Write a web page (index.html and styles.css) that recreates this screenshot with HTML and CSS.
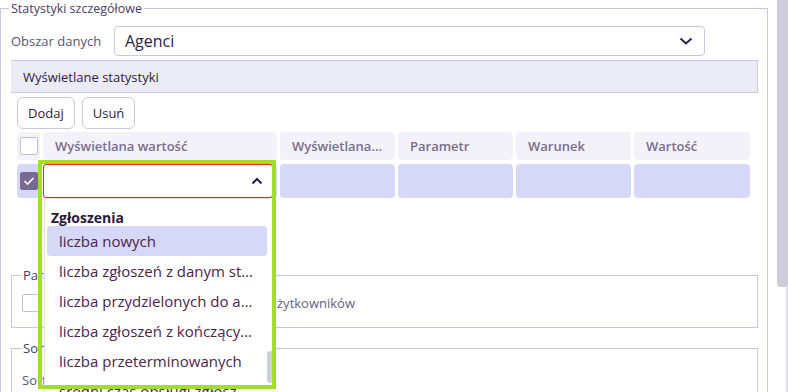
FILE: index.html
```html
<!DOCTYPE html>
<html lang="pl">
<head>
  <meta charset="UTF-8">
  <meta name="viewport" content="width=device-width, initial-scale=1.0">
  <title>Statystyki szczegółowe</title>
  <link rel="stylesheet" href="styles.css">
</head>
<body>
  <div class="page">
    <main class="main">
      <fieldset class="panel">
        <legend>Statystyki szczegółowe</legend>

        <div class="field-row">
          <label class="field-label">Obszar danych</label>
          <div class="select">
            <span>Agenci</span>
            <svg class="chevron" width="14" height="8" viewBox="0 0 14 8"><path d="M1.5 1.5 L7 6.5 L12.5 1.5" fill="none" stroke="#2a1d4a" stroke-width="2"/></svg>
          </div>
        </div>

        <div class="section-bar">Wyświetlane statystyki</div>

        <div class="toolbar">
          <button class="btn">Dodaj</button>
          <button class="btn">Usuń</button>
        </div>

        <div class="stats-table">
          <div class="cell head check-cell"><span class="box"></span></div>
          <div class="cell head">Wyświetlana wartość</div>
          <div class="cell head">Wyświetlana nazwa</div>
          <div class="cell head">Parametr</div>
          <div class="cell head">Warunek</div>
          <div class="cell head">Wartość</div>

          <div class="cell data check-cell">
            <span class="box checked">
              <svg width="12" height="10" viewBox="0 0 12 10"><path d="M1.5 5 L4.5 8 L10.5 2" fill="none" stroke="#fff" stroke-width="1.6"/></svg>
            </span>
          </div>
          <div class="cell data combo-cell">
            <div class="combo">
              <svg class="chevron" width="12" height="8" viewBox="0 0 12 8"><path d="M1.5 6.5 L6 2 L10.5 6.5" fill="none" stroke="#2a1d4a" stroke-width="2"/></svg>
            </div>
            <div class="listbox">
              <div class="list-items">
                <div class="group">Zgłoszenia</div>
                <div class="option active">liczba nowych</div>
                <div class="option">liczba zgłoszeń z danym statusem</div>
                <div class="option">liczba przydzielonych do agenta</div>
                <div class="option">liczba zgłoszeń z kończącym się terminem</div>
                <div class="option">liczba przeterminowanych</div>
                <div class="option">średni czas obsługi zgłoszenia</div>
              </div>
              <div class="list-scroll"><span class="thumb"></span></div>
            </div>
            <div class="highlight"></div>
          </div>
          <div class="cell data"></div>
          <div class="cell data"></div>
          <div class="cell data"></div>
          <div class="cell data"></div>
        </div>

        <fieldset class="group-box params">
          <legend>Parametry</legend>
          <label class="check-row"><span class="box"></span>Uwzględnij nieaktywnych i ukrytych użytkowników</label>
        </fieldset>

        <fieldset class="group-box sorting">
          <legend>Sortowanie</legend>
          <div class="sort-label">Sortuj według</div>
        </fieldset>
      </fieldset>
    </main>
    <div class="scrollbar"><span class="scroll-thumb"></span></div>
  </div>
</body>
</html>
```

FILE: styles.css
```css
body {
  margin: 0;
  font-family: "Open Sans", "DejaVu Sans", sans-serif;
  color: #2b2340;
  background: #ffffff;
  overflow: hidden;
}

.page {
  display: flex;
  height: 392px;
  overflow: hidden;
}

.main {
  flex: 1;
}

.panel {
  margin: 0 9px 0 0;
  padding: 0 9px 0 10px;
  border: 1px solid #c9c7dd;
  border-bottom: none;
  height: 420px;
}

.panel > legend {
  font-size: 12.5px;
  color: #4a4060;
  padding: 0 2px;
  margin-left: -2px;
}

.field-row {
  display: flex;
  align-items: center;
  margin-top: 9px;
}

.field-label {
  width: 103px;
  font-size: 13px;
  color: #5b5470;
}

.select {
  width: 591px;
  height: 30px;
  box-sizing: border-box;
  border: 1px solid #c9c7dd;
  border-radius: 4px;
  display: flex;
  align-items: center;
  justify-content: space-between;
  padding: 0 11px 0 10px;
  font-size: 16px;
  color: #2b2340;
}

.section-bar {
  margin-top: 4px;
  height: 33px;
  box-sizing: border-box;
  background: #ebebf6;
  border-top: 1px solid #c9c7e3;
  border-bottom: 1px solid #c9c7e3;
  border-right: 1px solid #c9c7e3;
  display: flex;
  align-items: center;
  padding-left: 12px;
  font-size: 13px;
  font-weight: 500;
}

.toolbar {
  display: flex;
  gap: 7px;
  margin: 4px 0 0 6px;
}

.btn {
  height: 32px;
  padding: 0 10px;
  background: #ffffff;
  border: 1px solid #c9c7dd;
  border-radius: 6px;
  font-family: inherit;
  font-size: 13px;
  font-weight: 500;
  color: #2b2340;
}

.stats-table {
  display: grid;
  grid-template-columns: 23px 234px 115px 115px 115px 116px;
  grid-template-rows: 28px 34px;
  column-gap: 3px;
  row-gap: 4px;
  margin: 3px 0 0 6px;
}

.cell {
  border-radius: 4px;
  display: flex;
  align-items: center;
  font-size: 13px;
  min-width: 0;
}

.cell.head {
  background: #f3f2f8;
  color: #7b6d8d;
  font-weight: 600;
  padding: 0 12px;
  white-space: nowrap;
  overflow: hidden;
  text-overflow: ellipsis;
  display: block;
  line-height: 28px;
}

.cell.data {
  background: #d6d8f8;
}

.cell.head.check-cell,
.check-cell {
  padding: 0;
  display: flex;
  justify-content: center;
  align-items: center;
}

.box {
  width: 18px;
  height: 18px;
  box-sizing: border-box;
  border: 1px solid #c4c0d2;
  border-radius: 2px;
  background: #ffffff;
  display: inline-flex;
  align-items: center;
  justify-content: center;
  flex-shrink: 0;
}

.box.checked {
  background: #776990;
  border-color: #776990;
}

.combo-cell {
  position: relative;
  background: transparent;
}

.combo {
  width: 230px;
  height: 34px;
  box-sizing: border-box;
  border: 1px solid #e3202c;
  border-radius: 3px;
  background: #ffffff;
  display: flex;
  align-items: center;
  justify-content: flex-end;
  padding-right: 9px;
}

.listbox {
  position: absolute;
  left: 1px;
  top: 34px;
  width: 228px;
  height: 240px;
  background: #ffffff;
  border: 1px solid #e4e3ee;
  border-radius: 3px;
  box-shadow: 0 2px 6px rgba(40, 30, 80, 0.12);
  display: flex;
  z-index: 2;
}

.list-items {
  width: 220px;
  padding: 5px 0 0 2px;
}

.group {
  font-size: 14px;
  font-weight: 700;
  color: #2a1a3a;
  padding-left: 4px;
  height: 22px;
  line-height: 28px;
}

.option {
  height: 30px;
  line-height: 30px;
  padding: 0 14px 0 12px;
  font-size: 15px;
  color: #4b2547;
  white-space: nowrap;
  overflow: hidden;
  text-overflow: ellipsis;
  border-radius: 4px;
}

.option.active {
  background: #d6d8f8;
}

.list-scroll {
  flex: 1;
  position: relative;
}

.thumb {
  position: absolute;
  left: 0;
  right: 0;
  top: 152px;
  height: 32px;
  border-radius: 4px;
  background: #cfcfd8;
}

.highlight {
  position: absolute;
  left: -5px;
  top: -4px;
  width: 230px;
  height: 221px;
  border: 4px solid #a2e01f;
  z-index: 3;
}

.group-box {
  margin: 0;
  padding: 0 10px;
  border: 1px solid #c9c7dd;
}

.group-box legend {
  font-size: 13px;
  color: #4a4060;
  padding: 0 1px;
}

.params {
  margin-top: 68px;
  height: 62px;
  box-sizing: border-box;
}

.check-row {
  display: flex;
  align-items: center;
  gap: 12px;
  font-size: 13px;
  color: #6a5d80;
  margin-top: 10px;
  white-space: nowrap;
}

.sorting {
  margin-top: 11px;
  height: 60px;
}

.sort-label {
  font-size: 13px;
  color: #5b5470;
  margin-top: 14px;
}

.scrollbar {
  width: 11px;
  border-right: 2px solid #dcdcf5;
  box-sizing: border-box;
}

.scroll-thumb {
  display: block;
  width: 11px;
  height: 287px;
  background: #cdccd8;
  border-radius: 0 0 4px 4px;
}
```
